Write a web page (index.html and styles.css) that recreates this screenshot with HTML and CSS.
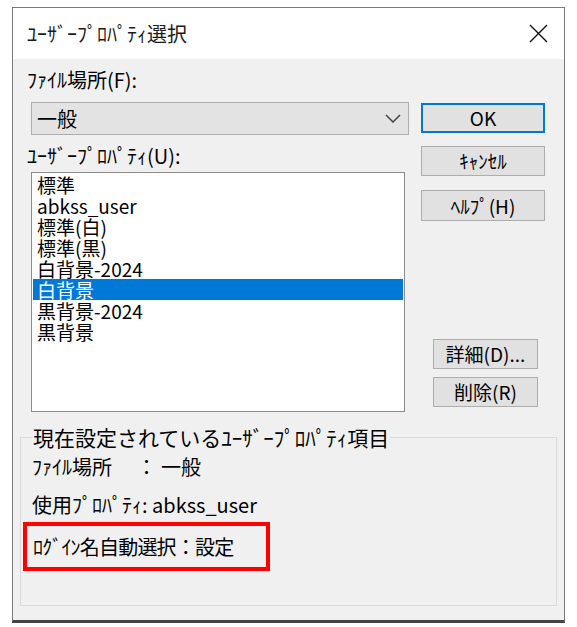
FILE: index.html
```html
<!DOCTYPE html>
<html lang="ja">
<head>
<meta charset="utf-8">
<link rel="stylesheet" href="styles.css">
</head>
<body>
<div class="window">
  <div class="titlebar">
    <span class="title">ﾕｰｻﾞｰﾌﾟﾛﾊﾟﾃｨ選択</span>
    <svg class="close" width="19" height="19" viewBox="0 0 19 19"><path d="M1 1L18 18M18 1L1 18" stroke="#111" stroke-width="1.4" fill="none"/></svg>
  </div>
  <div class="content">
    <div class="label first">ﾌｧｲﾙ場所(F):</div>
    <div class="main">
      <div class="leftcol">
        <div class="combo"><span>一般</span>
          <svg class="chev" width="16" height="9" viewBox="0 0 16 9"><path d="M1 1L8 8L15 1" stroke="#444" stroke-width="1.5" fill="none"/></svg>
        </div>
        <div class="label second">ﾕｰｻﾞｰﾌﾟﾛﾊﾟﾃｨ(U):</div>
        <div class="list">
          <div class="item">標準</div>
          <div class="item">abkss_user</div>
          <div class="item">標準(白)</div>
          <div class="item">標準(黒)</div>
          <div class="item">白背景-2024</div>
          <div class="item selected">白背景</div>
          <div class="item">黒背景-2024</div>
          <div class="item">黒背景</div>
        </div>
      </div>
      <div class="rightcol">
        <div class="btn ok">OK</div>
        <div class="btn cancel">ｷｬﾝｾﾙ</div>
        <div class="btn help">ﾍﾙﾌﾟ(H)</div>
        <div class="btn small detail">詳細(D)...</div>
        <div class="btn small del">削除(R)</div>
      </div>
    </div>
    <fieldset class="group">
      <legend>現在設定されているﾕｰｻﾞｰﾌﾟﾛﾊﾟﾃｨ項目</legend>
      <div class="row r1">ﾌｧｲﾙ場所　 ： 一般</div>
      <div class="row r2">使用ﾌﾟﾛﾊﾟﾃｨ: abkss_user</div>
      <div class="row r3">ﾛｸﾞｲﾝ名自動選択：設定</div>
    </fieldset>
  </div>
</div>
</body>
</html>
```

FILE: styles.css
```css
* { box-sizing: border-box; }
html, body { margin: 0; padding: 0; background: #fff; }
body {
  font-family: "Noto Sans CJK JP", "Noto Sans", sans-serif;
  font-size: 20px;
  color: #000;
}
.window {
  margin: 7px 0 0 12px;
  width: 553px;
  height: 616px;
  border: 1px solid #7a7a7a;
  border-bottom: 3px solid #454545;
  background: #f0f0f0;
  display: flex;
  flex-direction: column;
}
.titlebar {
  height: 51px;
  background: #fff;
  display: flex;
  align-items: center;
  justify-content: space-between;
  padding: 0 16px 0 14px;
}
.title { font-size: 20px; line-height: 22px; color: #1a1a1a; }
.close { display: block; }
.content {
  flex: 1;
  padding: 11px 0 0 14px;
}
.label { line-height: 20px; height: 20px; white-space: nowrap; }
.main {
  margin-top: 12px;
  display: grid;
  grid-template-columns: 382px 124px;
  column-gap: 12px;
}
.leftcol { display: flex; flex-direction: column; }
.combo {
  margin-left: 4px;
  height: 33px;
  background: #e3e3e3;
  border: 1px solid #adadad;
  display: flex;
  align-items: center;
  justify-content: space-between;
  padding: 0 7px 0 5px;
  line-height: 20px;
}
.chev { display: block; }
.label.second { margin-top: 11px; }
.list {
  margin-left: 4px;
  margin-top: 6px;
  width: 374px;
  height: 240px;
  background: #fff;
  border: 1px solid #8c8c8c;
  padding: 1px 1px 0;
  font-size: 19px;
}
.item {
  height: 21px;
  line-height: 21px;
  padding-left: 4px;
  white-space: nowrap;
}
.item.selected { background: #0078d7; color: #fff; }
.rightcol { display: flex; flex-direction: column; }
.btn {
  background: #e1e1e1;
  border: 1px solid #adadad;
  display: flex;
  align-items: center;
  justify-content: center;
  line-height: 20px;
  font-size: 19px;
  white-space: nowrap;
}
.ok { margin-top: 1px; height: 30px; border: 2px solid #0078d7; }
.cancel { margin-top: 13px; height: 30px; }
.help { margin-top: 14px; height: 31px; }
.small { margin-left: 12px; width: 105px; height: 30px; }
.detail { margin-top: 118px; }
.del { margin-top: 8px; }
.group {
  margin: 14px 0 0 -7px;
  width: 537px;
  border: 1px solid #dadada;
  padding: 0 0 34px 11px;
}
.group legend {
  padding: 0 1px;
  line-height: 22px;
  font-size: 21px;
  white-space: nowrap;
}
.row { line-height: 20px; height: 20px; white-space: nowrap; }
.r1 { margin-top: 9px; }
.r2 { margin-top: 18px; }
.r3 {
  margin-top: 7px;
  margin-left: -9px;
  width: 247px;
  height: 49px;
  border: 4px solid #ff0000;
  padding: 11px 0 0 6px;
  line-height: 20px;
  letter-spacing: -0.8px;
}
```
